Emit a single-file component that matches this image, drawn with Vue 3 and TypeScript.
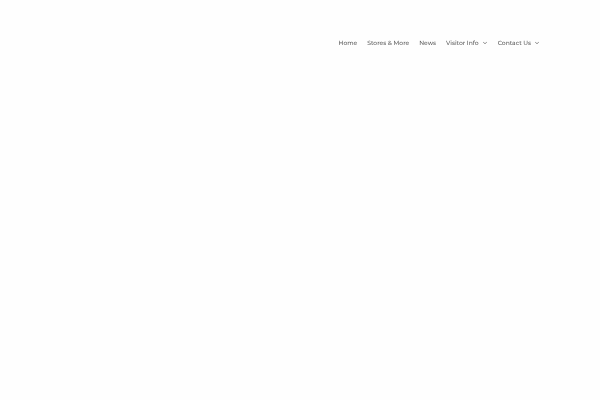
<script setup lang="ts">
interface NavItem {
  label: string
  href: string
  hasMenu: boolean
}

const items: NavItem[] = [
  { label: 'Home', href: '#home', hasMenu: false },
  { label: 'Stores & More', href: '#stores', hasMenu: false },
  { label: 'News', href: '#news', hasMenu: false },
  { label: 'Visitor Info', href: '#visitor', hasMenu: true },
  { label: 'Contact Us', href: '#contact', hasMenu: true },
]
</script>

<template>
  <header class="header">
    <nav>
      <ul class="menu">
        <li v-for="item in items" :key="item.href">
          <a class="link" :href="item.href">
            {{ item.label }}
            <svg v-if="item.hasMenu" class="chevron" viewBox="0 0 6 6" aria-hidden="true">
              <path d="M1.2 2.2 L3 3.7 L4.8 2.2" />
            </svg>
          </a>
        </li>
      </ul>
    </nav>
  </header>
</template>

<style>
body {
  margin: 0;
  background: #fefefe;
}
</style>

<style scoped>
.header {
  display: flex;
  justify-content: flex-end;
  padding: 36px 10% 0;
}

.menu {
  display: flex;
  gap: 10px;
  margin: 0;
  padding: 0;
  list-style: none;
  will-change: opacity;
}

.link {
  display: flex;
  align-items: center;
  gap: 3px;
  color: #5c5c5c;
  font-family: Montserrat, Inter, "Open Sans", sans-serif;
  font-size: 6px;
  font-weight: 500;
  line-height: 14px;
  text-decoration: none;
  text-rendering: geometricPrecision;
  white-space: nowrap;
}

.chevron {
  width: 6px;
  height: 6px;
  fill: none;
  stroke: currentColor;
  stroke-width: 0.7;
}
</style>
